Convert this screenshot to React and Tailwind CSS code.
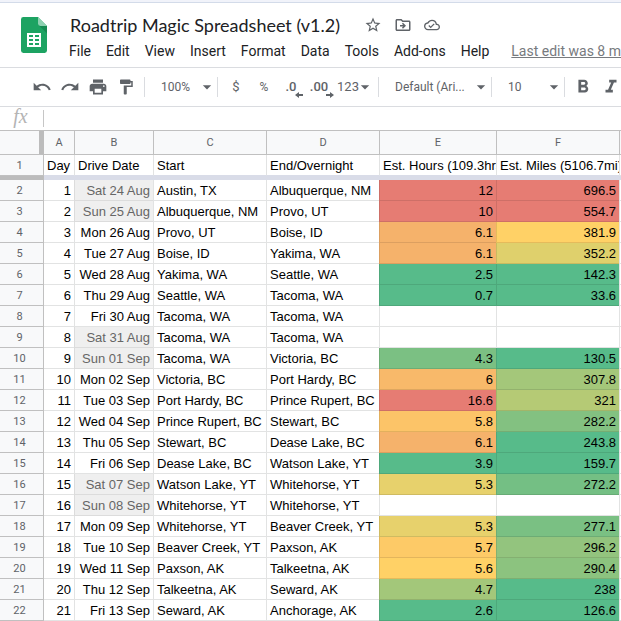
import React from "react";
import {
  MdStarBorder,
  MdOutlineDriveFileMove,
  MdOutlineCloudDone,
  MdUndo,
  MdRedo,
  MdPrint,
  MdFormatPaint,
  MdArrowDropDown,
  MdFormatBold,
  MdFormatItalic,
} from "react-icons/md";

const MENUS = ["File", "Edit", "View", "Insert", "Format", "Data", "Tools", "Add-ons", "Help"];

const GREEN = "bg-[#57bb8a]";
const RED = "bg-[#e67c73]";

// day, date, weekend, start, end, hours, hours colour, miles, miles colour
const ROWS = [
  [1, "Sat 24 Aug", true, "Austin, TX", "Albuquerque, NM", "12", RED, "696.5", RED],
  [2, "Sun 25 Aug", true, "Albuquerque, NM", "Provo, UT", "10", RED, "554.7", RED],
  [3, "Mon 26 Aug", false, "Provo, UT", "Boise, ID", "6.1", "bg-[#f5b26b]", "381.9", "bg-[#ffd166]"],
  [4, "Tue 27 Aug", false, "Boise, ID", "Yakima, WA", "6.1", "bg-[#f5b26b]", "352.2", "bg-[#dfd06c]"],
  [5, "Wed 28 Aug", false, "Yakima, WA", "Seattle, WA", "2.5", GREEN, "142.3", GREEN],
  [6, "Thu 29 Aug", false, "Seattle, WA", "Tacoma, WA", "0.7", GREEN, "33.6", GREEN],
  [7, "Fri 30 Aug", false, "Tacoma, WA", "Tacoma, WA", "", "", "", ""],
  [8, "Sat 31 Aug", true, "Tacoma, WA", "Tacoma, WA", "", "", "", ""],
  [9, "Sun 01 Sep", true, "Tacoma, WA", "Victoria, BC", "4.3", "bg-[#7bc083]", "130.5", GREEN],
  [10, "Mon 02 Sep", false, "Victoria, BC", "Port Hardy, BC", "6", "bg-[#f8b96a]", "307.8", "bg-[#a4c77a]"],
  [11, "Tue 03 Sep", false, "Port Hardy, BC", "Prince Rupert, BC", "16.6", RED, "321", "bg-[#b5ca75]"],
  [12, "Wed 04 Sep", false, "Prince Rupert, BC", "Stewart, BC", "5.8", "bg-[#fcc468]", "282.2", "bg-[#83c181]"],
  [13, "Thu 05 Sep", false, "Stewart, BC", "Dease Lake, BC", "6.1", "bg-[#f5b26b]", "243.8", GREEN],
  [14, "Fri 06 Sep", false, "Dease Lake, BC", "Watson Lake, YT", "3.9", GREEN, "159.7", GREEN],
  [15, "Sat 07 Sep", true, "Watson Lake, YT", "Whitehorse, YT", "5.3", "bg-[#e7d16c]", "272.2", "bg-[#74bf84]"],
  [16, "Sun 08 Sep", true, "Whitehorse, YT", "Whitehorse, YT", "", "", "", ""],
  [17, "Mon 09 Sep", false, "Whitehorse, YT", "Beaver Creek, YT", "5.3", "bg-[#e7d16c]", "277.1", "bg-[#7ac083]"],
  [18, "Tue 10 Sep", false, "Beaver Creek, YT", "Paxson, AK", "5.7", "bg-[#fdca67]", "296.2", "bg-[#93c47e]"],
  [19, "Wed 11 Sep", false, "Paxson, AK", "Talkeetna, AK", "5.6", "bg-[#ffd166]", "290.4", "bg-[#8cc37f]"],
  [20, "Thu 12 Sep", false, "Talkeetna, AK", "Seward, AK", "4.7", "bg-[#a3c77a]", "238", GREEN],
  [21, "Fri 13 Sep", false, "Seward, AK", "Anchorage, AK", "2.6", GREEN, "126.6", GREEN],
];

function SheetsLogo() {
  return (
    <svg viewBox="0 0 26 36" className="h-9 w-[26px]" aria-hidden="true">
      <path d="M2.4 0H17l9 9v24.6a2.4 2.4 0 0 1-2.4 2.4H2.4A2.4 2.4 0 0 1 0 33.600V2.400A2.400 2.400 0 0 1 2.400 0z" fill="#1da362" />
      <path d="M17.700 8.300 26 16.600V9z" fill="#158a51" />
      <path d="M17 0l9 9h-6.600A2.400 2.400 0 0 1 17 6.600z" fill="#8ed1b1" />
      <path d="M6 16h14v14H6zM8 18v2h4v-2zm6 0v2h4v-2zM8 22v2h4v-2zm6 0v2h4v-2zM8 26v2h4v-2zm6 0v2h4v-2z" fill="#fff" fillRule="evenodd" />
    </svg>
  );
}

function Separator() {
  return <span className="h-5 w-px shrink-0 bg-[#dadce0]" />;
}

function ToolButton({ label, className, children }) {
  return (
    <button type="button" aria-label={label} className={`flex h-7 shrink-0 items-center justify-center ${className}`}>
      {children}
    </button>
  );
}

function ToolSelect({ label, value, className }) {
  return (
    <div className={`relative flex shrink-0 items-center ${className}`}>
      <select aria-label={label} className="h-7 w-full appearance-none bg-transparent outline-none">
        <option>{value}</option>
      </select>
      <MdArrowDropDown size={20} className="pointer-events-none absolute right-0" />
    </div>
  );
}

function DecimalButton({ label, digits, className, right }) {
  return (
    <ToolButton label={label} className={className}>
      <span className="relative text-[13px] font-medium">
        {digits}
        <svg viewBox="0 0 8 6" className="absolute -right-1.5 -bottom-0.5 h-1.5 w-2" aria-hidden="true">
          {right ? (
            <path d="M0 2h4V0l4 3-4 3V4H0z" fill="#5f6368" />
          ) : (
            <path d="M8 2H4V0L0 3l4 3V4h4z" fill="#5f6368" />
          )}
        </svg>
      </span>
    </ToolButton>
  );
}

function RowNumber({ n }) {
  return (
    <th
      scope="row"
      className="h-[21px] border-r border-b border-[#c0c0c0] bg-[#f8f9fa] pt-px pr-1 text-center font-[Roboto,sans-serif] text-[11px] leading-[19px] font-normal text-[#5f6368]"
    >
      {n}
    </th>
  );
}

function Cell({ className = "", children }) {
  return (
    <td className={`h-[21px] overflow-hidden border-b px-[3px] pt-0.5 leading-[18px] whitespace-nowrap ${className}`}>
      {children}
    </td>
  );
}

const LINE = "border-l border-[#e2e3e3]";

function heat(color) {
  return `text-right border-l ${color ? `${color} border-black/10` : "border-[#e2e3e3]"}`;
}

export default function App() {
  return (
    <div className="w-full overflow-hidden bg-white font-[Roboto,'Liberation_Sans',sans-serif] text-[#202124]">
      <div className="h-[3px] border-b border-[#d3dbe9] bg-[#f1f3fa]" />

      <header className="flex h-[65px] items-start border-b border-[#dadce0] pl-[21px]">
        <div className="mt-3.5 shrink-0">
          <SheetsLogo />
        </div>
        <div className="ml-[15px] min-w-0">
          <div className="mt-2 flex h-7 items-center pl-2">
            <h1 className="font-[Lato,sans-serif] text-lg whitespace-nowrap">Roadtrip Magic Spreadsheet (v1.2)</h1>
            <div className="ml-6 flex items-center gap-3 text-[#5f6368]">
              <button type="button" aria-label="Star"><MdStarBorder size={18} /></button>
              <button type="button" aria-label="Move"><MdOutlineDriveFileMove size={18} /></button>
              <button type="button" aria-label="Document status"><MdOutlineCloudDone size={16} /></button>
            </div>
          </div>
          <nav className="flex h-6 items-center text-sm whitespace-nowrap">
            {MENUS.map((m) => (
              <button key={m} type="button" className="pr-2 pl-[7px]">{m}</button>
            ))}
            <a href="#history" className="ml-3.5 text-[#777a7e] underline">Last edit was 8 minutes ago</a>
          </nav>
        </div>
      </header>

      <div className="flex h-[39px] items-center border-b border-[#dadce0] pl-7 text-xs whitespace-nowrap text-[#5f6368]">
        <ToolButton label="Undo" className="w-7"><MdUndo size={20} /></ToolButton>
        <ToolButton label="Redo" className="w-7"><MdRedo size={20} /></ToolButton>
        <ToolButton label="Print" className="w-7"><MdPrint size={20} /></ToolButton>
        <ToolButton label="Paint format" className="mr-1 w-7"><MdFormatPaint size={18} /></ToolButton>
        <Separator />
        <ToolSelect label="Zoom" value="100%" className="ml-4 w-14" />
        <Separator />
        <ToolButton label="Format as currency" className="ml-1 w-7 text-[13px]">$</ToolButton>
        <ToolButton label="Format as percent" className="w-7">%</ToolButton>
        <DecimalButton label="Decrease decimal places" digits=".0" className="w-[26px]" />
        <DecimalButton label="Increase decimal places" digits=".00" className="w-[30px]" right />
        <ToolButton label="More formats" className="mr-1 ml-1 w-9 text-[13px]">
          123<MdArrowDropDown size={20} className="-ml-1 shrink-0" />
        </ToolButton>
        <Separator />
        <ToolSelect label="Font" value="Default (Ari..." className="ml-4 w-24" />
        <Separator />
        <ToolSelect label="Font size" value="10" className="ml-4 w-14" />
        <Separator />
        <ToolButton label="Bold" className="ml-1 w-7"><MdFormatBold size={22} /></ToolButton>
        <ToolButton label="Italic" className="w-7"><MdFormatItalic size={22} /></ToolButton>
      </div>

      <div className="flex h-6 items-center border-b border-[#c0c0c0]">
        <label
          htmlFor="formula"
          className="w-[41px] shrink-0 pb-1.5 text-center font-['Liberation_Serif',serif] text-xl leading-5 text-[#b4b4b4] italic"
        >
          fx
        </label>
        <input id="formula" className="ml-0.5 h-[17px] min-w-0 flex-1 border-l border-[#c6c6c6] px-2 text-xs outline-none" />
      </div>

      <table className="w-full table-fixed border-separate border-spacing-0 font-['Liberation_Sans',Arial,sans-serif] text-[13px] text-black">
        <colgroup>
          <col className="w-11" />
          <col className="w-[30px]" />
          <col className="w-[79px]" />
          <col className="w-[113px]" />
          <col className="w-[113px]" />
          <col className="w-[117px]" />
          <col className="w-[123px]" />
          <col />
        </colgroup>
        <thead>
          <tr className="bg-[#f8f9fa] text-center font-[Roboto,sans-serif] text-[11px] text-[#5f6368]">
            <td className="h-6 border-r-[5px] border-b border-[#bcbcbc] border-b-[#c0c0c0]" />
            <th scope="col" className="border-b border-[#c0c0c0] pt-0.5 font-normal">A</th>
            {["B", "C", "D", "E", "F"].map((c) => (
              <th key={c} scope="col" className="border-b border-l border-[#c0c0c0] pt-0.5 font-normal">{c}</th>
            ))}
            <td className="border-b border-l border-[#c0c0c0]" />
          </tr>
        </thead>
        <tbody>
          <tr>
            <RowNumber n={1} />
            <Cell className="border-[#d9dce8]">Day</Cell>
            {["Drive Date", "Start", "End/Overnight", "Est. Hours (109.3hrs)", "Est. Miles (5106.7mi)"].map((t) => (
              <Cell key={t} className="border-l border-[#e2e3e3] border-b-[#d9dce8]">{t}</Cell>
            ))}
            <Cell className={LINE} />
          </tr>
          <tr aria-hidden="true">
            <td className="h-1 bg-[#bcbcbc]" />
            <td colSpan={7} className="h-1 bg-[#d9dce8]" />
          </tr>
          {ROWS.map(([day, date, weekend, start, end, hours, hc, miles, mc]) => (
            <tr key={day}>
              <RowNumber n={day + 1} />
              <Cell className="border-[#e2e3e3] text-right">{day}</Cell>
              <Cell
                className={`border-l text-right ${weekend ? "border-[#dcdcdc] bg-[#efefef] text-[#666666]" : "border-[#e2e3e3]"}`}
              >
                {date}
              </Cell>
              <Cell className={LINE}>{start}</Cell>
              <Cell className={LINE}>{end}</Cell>
              <Cell className={heat(hc)}>{hours}</Cell>
              <Cell className={heat(mc)}>{miles}</Cell>
              <Cell className={LINE} />
            </tr>
          ))}
        </tbody>
      </table>
    </div>
  );
}
